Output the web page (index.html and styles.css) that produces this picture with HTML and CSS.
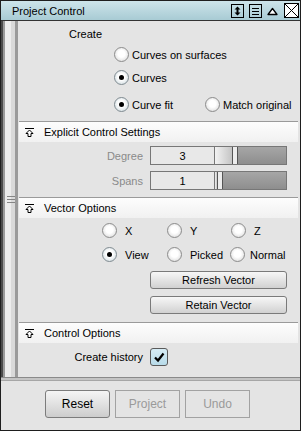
FILE: index.html
```html
<!DOCTYPE html>
<html lang="en">
<head>
  <meta charset="UTF-8">
  <title>Project Control</title>
  <link rel="stylesheet" href="styles.css">
</head>
<body>

  <div class="window">
    <div class="titlebar">
      <span class="title">Project Control</span>
      <div class="tools">
        <svg class="ico" width="13" height="14" viewBox="0 0 13 14"><rect x="0.5" y="0.5" width="12" height="13" fill="none" stroke="#000"/><path d="M6.5 4v6" stroke="#000" stroke-width="2"/><path d="M3.5 5.5L6.5 2.5L9.5 5.5ZM3.5 8.5L6.5 11.5L9.5 8.5Z" fill="#000"/></svg>
        <svg class="ico" width="13" height="14" viewBox="0 0 13 14"><rect x="0.5" y="0.5" width="12" height="13" fill="none" stroke="#000"/><path d="M3 4.5h7M3 7.5h7M3 10.5h7" stroke="#000"/></svg>
        <svg class="ico" width="11" height="14" viewBox="0 0 11 14"><path d="M1 10.5L5.5 4.5L10 10.5Z" fill="#fff" stroke="#000" stroke-width="1.3" stroke-linejoin="round"/></svg>
        <svg class="ico" width="15" height="15" viewBox="0 0 15 15"><rect x="0.5" y="0.5" width="14" height="14" fill="#fff" stroke="#000"/><path d="M1 1L14 14M14 1L1 14" stroke="#000"/></svg>
      </div>
    </div>

    <div class="main">
      <div class="scroll"><div class="grip"></div></div>

      <div class="panel">
        <div class="create">
          <div class="create-label">Create</div>
          <div class="opt opt-1"><span class="choice"><span class="radio"></span>Curves on surfaces</span></div>
          <div class="opt opt-2"><span class="choice"><span class="radio on"></span>Curves</span></div>
          <div class="opt opt-3">
            <span class="choice wide"><span class="radio on"></span>Curve fit</span>
            <span class="choice"><span class="radio"></span>Match original</span>
          </div>
        </div>

        <div class="section">
          <div class="sec-head">
            <svg class="fold" width="9" height="9" viewBox="0 0 9 9"><path d="M0 0.5h9" stroke="#000"/><path d="M4.5 2L8 5.5H6V8.5H3V5.5H1Z" fill="#fff" stroke="#000"/></svg>
            Explicit Control Settings
          </div>
          <div class="explicit">
            <div class="frow">
              <span class="flabel">Degree</span>
              <span class="field">3</span>
              <span class="slider"><span class="fill" style="width:17px"></span><span class="thumb"></span></span>
            </div>
            <div class="frow">
              <span class="flabel">Spans</span>
              <span class="field">1</span>
              <span class="slider"><span class="fill" style="width:2px"></span><span class="thumb"></span></span>
            </div>
          </div>
        </div>

        <div class="section">
          <div class="sec-head">
            <svg class="fold" width="9" height="9" viewBox="0 0 9 9"><path d="M0 0.5h9" stroke="#000"/><path d="M4.5 2L8 5.5H6V8.5H3V5.5H1Z" fill="#fff" stroke="#000"/></svg>
            Vector Options
          </div>
          <div class="vector">
            <div class="vrow">
              <span class="vchoice"><span class="radio"></span>X</span>
              <span class="vchoice"><span class="radio"></span>Y</span>
              <span class="vchoice"><span class="radio"></span>Z</span>
            </div>
            <div class="vrow">
              <span class="vchoice"><span class="radio on"></span>View</span>
              <span class="vchoice"><span class="radio"></span>Picked</span>
              <span class="vchoice last"><span class="radio"></span>Normal</span>
            </div>
            <button class="vbtn first">Refresh Vector</button>
            <button class="vbtn">Retain Vector</button>
          </div>
        </div>

        <div class="section">
          <div class="sec-head">
            <svg class="fold" width="9" height="9" viewBox="0 0 9 9"><path d="M0 0.5h9" stroke="#000"/><path d="M4.5 2L8 5.5H6V8.5H3V5.5H1Z" fill="#fff" stroke="#000"/></svg>
            Control Options
          </div>
          <div class="control">
            <span class="clabel">Create history</span>
            <span class="check"><svg width="16" height="16" viewBox="0 0 16 16"><path d="M4 8.5L7 11.5L12.5 4.5" fill="none" stroke="#000" stroke-width="2.2"/></svg></span>
          </div>
        </div>
      </div>
    </div>

    <div class="separator"></div>

    <div class="footer">
      <button class="btn">Reset</button>
      <button class="btn off">Project</button>
      <button class="btn off">Undo</button>
    </div>
  </div>

</body>
</html>
```

FILE: styles.css
```css
* {
  box-sizing: border-box;
}

body {
  margin: 0;
  font-family: "Liberation Sans", Arial, sans-serif;
  font-size: 11px;
  color: #000;
}

.window {
  width: 301px;
  height: 431px;
  border: 1px solid #1e1e1e;
  background: #e4e4e4;
  display: flex;
  flex-direction: column;
}

.titlebar {
  height: 20px;
  flex: none;
  border-bottom: 1px solid #333;
  background: linear-gradient(#cde4ea, #a8cbd4);
  display: flex;
  align-items: center;
  padding-left: 11px;
}

.title {
  padding-top: 1px;
}

.tools {
  margin-left: auto;
  margin-right: 1px;
  display: flex;
  align-items: center;
}

.ico {
  display: block;
  flex: none;
  margin-left: 5px;
}

.ico:nth-child(4) {
  margin-left: 6px;
}

.main {
  height: 356px;
  flex: none;
  display: flex;
  padding-right: 2px;
}

.scroll {
  width: 18px;
  flex: none;
  background: linear-gradient(to right, #4a4a4a 0 2px, #9a9a9a 2px 4px, #ececec 4px 10px, #d9d9d9 10px 14px, #9a9a9a 14px 17px, #e4e4e4 17px);
  display: flex;
  align-items: center;
  padding-left: 6px;
}

.grip {
  width: 8px;
  height: 7px;
  background: linear-gradient(#858585 0 1px, transparent 1px 3px, #858585 3px 4px, transparent 4px 6px, #858585 6px 7px);
}

.panel {
  width: 279px;
}

/* create block */

.create {
  height: 100px;
  padding-top: 5px;
}

.create-label {
  height: 16px;
  line-height: 16px;
  padding-left: 50px;
}

.opt {
  display: flex;
  align-items: center;
  height: 15px;
  padding-left: 95px;
  margin-top: 5px;
}

.opt-2 {
  margin-top: 8px;
}

.opt-3 {
  margin-top: 12px;
}

.choice {
  display: flex;
  align-items: center;
  gap: 3px;
}

.choice.wide {
  width: 91px;
}

.radio {
  width: 15px;
  height: 15px;
  flex: none;
  border-radius: 50%;
  border: 1px solid #8c8c8c;
  background: radial-gradient(circle at 50% 45%, #fff 35%, #d2d2d2 100%);
  position: relative;
}

.radio.on {
  border-color: #7f8a90;
  background: radial-gradient(circle at 50% 45%, #fff 35%, #c4d2d8 100%);
}

.radio.on::after {
  content: "";
  position: absolute;
  left: 4px;
  top: 4px;
  width: 5px;
  height: 5px;
  border-radius: 50%;
  background: #000;
}

/* sections */

.section {
  border-top: 1px solid #9a9a9a;
}

.sec-head {
  height: 20px;
  background: linear-gradient(#fdfdfd, #f1f1f1);
  display: flex;
  align-items: center;
  padding-left: 6px;
  gap: 10px;
}

.explicit {
  height: 55px;
  padding-top: 4px;
}

.frow {
  display: flex;
  align-items: center;
  height: 19px;
}

.frow + .frow {
  margin-top: 6px;
}

.flabel {
  width: 124px;
  margin-right: 7px;
  text-align: right;
  color: #8a8a8a;
}

.field {
  width: 65px;
  height: 19px;
  border: 1px solid #777;
  background: #e8e8e8;
  display: flex;
  align-items: center;
  justify-content: center;
}

.slider {
  width: 72px;
  height: 19px;
  border: 1px solid #777;
  border-left: none;
  display: flex;
  background: linear-gradient(#a6a6a6, #8e8e8e);
}

.fill {
  background: linear-gradient(to right, #f2f2f2, #c4c4c4);
}

.thumb {
  width: 6px;
  background: #ededed;
  border-left: 1px solid #555;
  border-right: 1px solid #555;
}

.vector {
  height: 104px;
  padding-top: 5px;
}

.vrow {
  display: grid;
  grid-template-columns: 65px 64px 60px;
  padding-left: 83px;
  height: 15px;
}

.vrow + .vrow {
  margin-top: 9px;
}

.vchoice {
  display: flex;
  align-items: center;
  gap: 8px;
}

.vchoice.last {
  margin-left: -1px;
  gap: 5px;
}

.vbtn {
  display: block;
  margin: 7px 0 0 131px;
  width: 137px;
  height: 18px;
  padding: 0;
  border: 1px solid #7a7a7a;
  border-radius: 3px;
  background: linear-gradient(#f7f7f7, #d1d1d1);
  font: inherit;
  color: #000;
}

.vbtn.first {
  margin-top: 9px;
}

.control {
  height: 34px;
  padding-top: 5px;
  display: flex;
}

.clabel {
  width: 124px;
  margin-right: 7px;
  text-align: right;
  line-height: 18px;
}

.check {
  width: 18px;
  height: 18px;
  border: 1px solid #5a5a5a;
  border-radius: 3px;
  background: linear-gradient(#d6ecf5, #b8dbe9);
  display: flex;
  align-items: center;
  justify-content: center;
}

.separator {
  height: 4px;
  flex: none;
  border-top: 1px solid #8a8a8a;
  border-bottom: 1px solid #a6a6a6;
  background: #c4c4c4;
}

.footer {
  flex: 1;
  display: flex;
  gap: 5px;
  padding: 9px 0 0 44px;
}

.btn {
  width: 65px;
  height: 28px;
  padding: 0;
  border: 1px solid #7c7c7c;
  border-radius: 3px;
  background: linear-gradient(#f5f5f5, #cdcdcd);
  font: inherit;
  font-size: 12px;
  color: #000;
}

.btn.off {
  border-color: #a2a2a2;
  border-radius: 0;
  background: #e4e4e4;
  color: #9a9a9a;
}
```
